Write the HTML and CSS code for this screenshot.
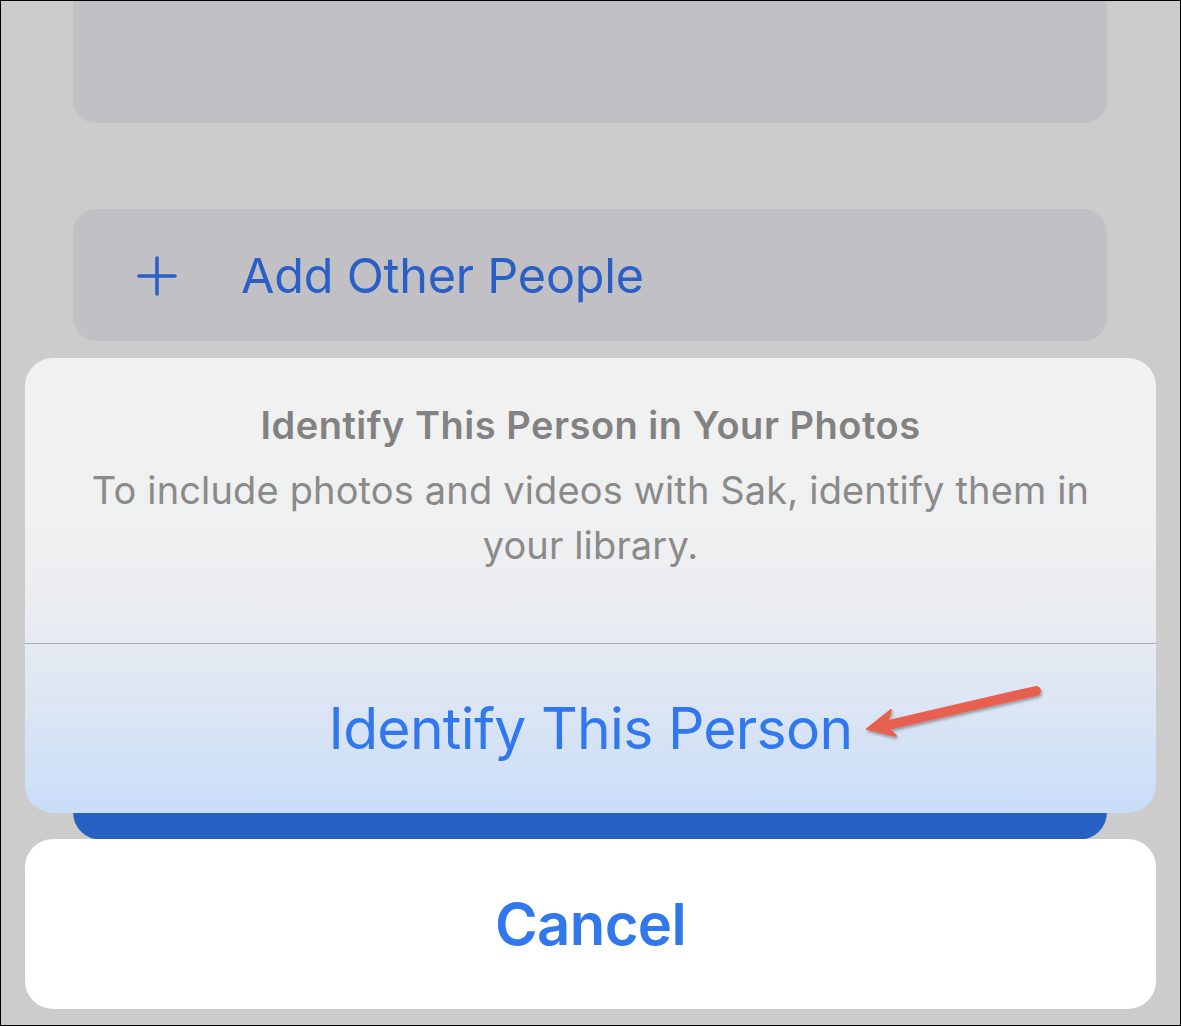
FILE: index.html
```html
<!DOCTYPE html>
<html>
<head>
<meta charset="utf-8">
<link rel="stylesheet" href="styles.css">
</head>
<body>
<div class="screen">
  <div class="list">
    <div class="card top-card"></div>
    <div class="card add-card">
      <svg class="plus" width="40" height="40" viewBox="0 0 40 40"><path d="M20 2 V38 M2 20 H38" stroke="#2a5fc6" stroke-width="3.6" stroke-linecap="round" fill="none"/></svg>
      <span class="add-label">Add Other People</span>
    </div>
    <div class="primary-btn"></div>
  </div>

  <div class="sheet">
    <div class="alert">
      <div class="alert-head">
        <div class="alert-title">Identify This Person in Your Photos</div>
        <div class="alert-msg">To include photos and videos with Sak, identify them in your library.</div>
      </div>
      <div class="alert-sep"></div>
      <div class="alert-action">Identify This Person</div>
    </div>
    <div class="cancel">Cancel</div>
  </div>

  <svg class="arrow" width="1181" height="1026" viewBox="0 0 1181 1026">
    <defs>
      <filter id="sh" x="-20%" y="-50%" width="140%" height="200%">
        <feDropShadow dx="1" dy="2" stdDeviation="1.6" flood-color="#000" flood-opacity="0.35"/>
      </filter>
    </defs>
    <g filter="url(#sh)" fill="#e8604f" stroke="#e8604f">
      <path d="M1036 691 L884 726" stroke-width="10" stroke-linecap="round" fill="none"/>
      <path d="M867 729 L891 710 L886 726 L896 736 Z" stroke-width="2" stroke-linejoin="round"/>
    </g>
  </svg>
</div>
</body>
</html>
```
FILE: styles.css
```css
html, body {
  margin: 0;
  padding: 0;
}
body {
  font-family: Inter, "Noto Sans", "Liberation Sans", sans-serif;
}
.screen {
  position: relative;
  width: 1181px;
  height: 1026px;
  box-sizing: border-box;
  border: 1px solid #000;
  background: #cccccc;
  overflow: hidden;
}
.list {
  display: flex;
  flex-direction: column;
  padding: 0 73px 0 72px;
}
.card {
  background: #c1c0c5;
}
.top-card {
  height: 122px;
  border-radius: 0 0 22px 22px;
}
.add-card {
  margin-top: 86px;
  height: 132px;
  border-radius: 24px;
  display: flex;
  align-items: center;
  padding-left: 64px;
  gap: 64px;
}
.plus {
  flex: none;
  margin-top: 2px;
}
.add-label {
  color: #2a5fc6;
  font-size: 48.5px;
  letter-spacing: -0.2px;
}
.primary-btn {
  margin-top: 59px;
  height: 440px;
  background: #2861c4;
  border-radius: 28px;
}
.sheet {
  position: absolute;
  left: 24px;
  top: 357px;
  width: 1131px;
  display: flex;
  flex-direction: column;
  gap: 26px;
}
.alert {
  border-radius: 28px;
  overflow: hidden;
  background: linear-gradient(180deg, #f1f1f1 0%, #eff0f1 40%, #e9ecf1 58%, #dde6f3 75%, #c9ddf8 100%);
}
.alert-head {
  height: 285px;
  box-sizing: border-box;
  padding: 44px 40px 0;
  text-align: center;
}
.alert-title {
  font-size: 38px;
  font-weight: 600;
  line-height: 46px;
  letter-spacing: 0.5px;
  color: #828282;
}
.alert-msg {
  margin-top: 15px;
  font-size: 38px;
  line-height: 55px;
  letter-spacing: 0.15px;
  color: #8a8a8a;
}
.alert-sep {
  height: 1px;
  background: #a8acb4;
}
.alert-action {
  height: 169px;
  display: flex;
  align-items: center;
  justify-content: center;
  font-size: 57px;
  color: #3178ee;
  letter-spacing: -0.7px;
}
.cancel {
  height: 170px;
  border-radius: 28px;
  background: #ffffff;
  display: flex;
  align-items: center;
  justify-content: center;
  font-size: 58px;
  font-weight: 600;
  color: #3178ee;
  letter-spacing: -0.6px;
}
.arrow {
  position: absolute;
  left: -1px;
  top: -1px;
  pointer-events: none;
}
```
